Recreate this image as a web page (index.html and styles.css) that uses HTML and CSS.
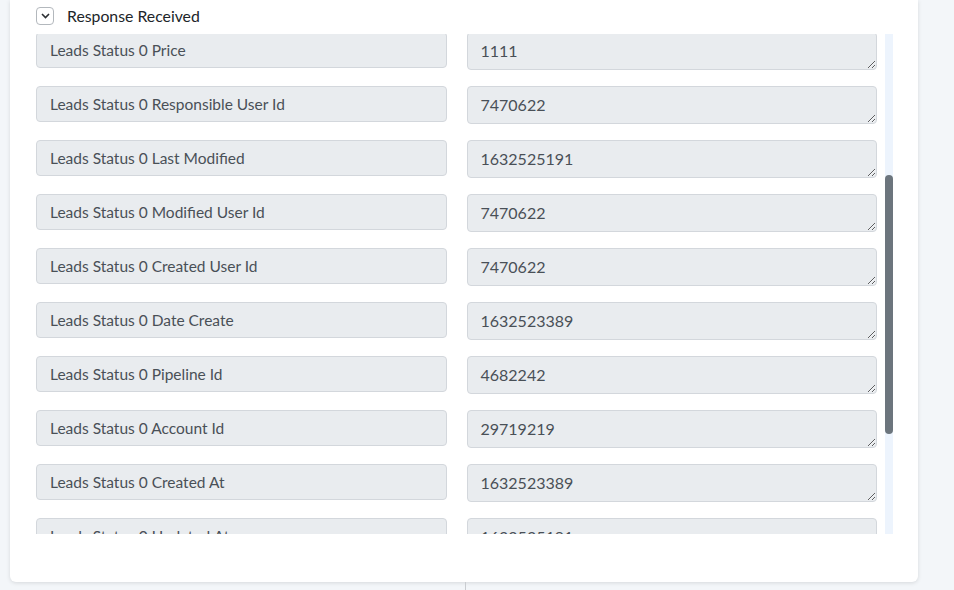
FILE: index.html
```html
<!DOCTYPE html>
<html lang="en">
<head>
    <meta charset="UTF-8">
    <meta name="viewport" content="width=device-width, initial-scale=1.0">
    <title>Response Received</title>
    <link rel="stylesheet" href="styles.css">
</head>
<body>
    <div class="card">
        <div class="card-head">
            <button class="toggle" type="button">
                <svg width="9" height="6" viewBox="0 0 9 6"><path d="M1 1l3.5 3.5L8 1" fill="none" stroke="#2b2f33" stroke-width="1.6"/></svg>
            </button>
            <span class="card-title">Response Received</span>
        </div>

        <div class="fields-wrap">
            <div class="fields" id="fields">
                <!-- rows are filled in by the script below -->
            </div>
            <div class="scroll-track">
                <div class="scroll-thumb" id="thumb"></div>
            </div>
        </div>
    </div>
    <div class="connector"></div>

    <script>
        const rows = [
            ["Account Subdomain", "pabbly"],
            ["Leads Status 0 Id", "1048117"],
            ["Leads Status 0 Name", "Deal #1048117"],
            ["Leads Status 0 Status Id", "43212289"],
            ["Leads Status 0 Old Status Id", "43212286"],
            ["Leads Status 0 Price", "1111"],
            ["Leads Status 0 Responsible User Id", "7470622"],
            ["Leads Status 0 Last Modified", "1632525191"],
            ["Leads Status 0 Modified User Id", "7470622"],
            ["Leads Status 0 Created User Id", "7470622"],
            ["Leads Status 0 Date Create", "1632523389"],
            ["Leads Status 0 Pipeline Id", "4682242"],
            ["Leads Status 0 Account Id", "29719219"],
            ["Leads Status 0 Created At", "1632523389"],
            ["Leads Status 0 Updated At", "1632525191"],
            ["Leads Status 0 Closed At", "0"],
            ["Account Id", "29719219"],
            ["Account Links Self", "https://pabbly.amocrm.ru"]
        ];

        const list = document.getElementById("fields");
        rows.forEach(([label, value]) => {
            const name = document.createElement("div");
            name.className = "field-name";
            name.textContent = label;

            const box = document.createElement("textarea");
            box.className = "field-value";
            box.rows = 1;
            box.readOnly = true;
            box.value = value;

            list.appendChild(name);
            list.appendChild(box);
        });

        list.scrollTop = 5 * 54 + 2;

        // size and place the thumb of the scrollbar
        const view = list.clientHeight;
        const full = list.scrollHeight;
        const thumbHeight = Math.round(view * view / full);
        const thumbTop = Math.round(list.scrollTop / full * view);
        const thumb = document.getElementById("thumb");
        thumb.style.height = thumbHeight + "px";
        thumb.style.marginTop = thumbTop + "px";
    </script>
</body>
</html>
```

FILE: styles.css
```css
* {
    box-sizing: border-box;
}
body {
    margin: 0;
    background-color: #f3f6f9;
    font-family: Lato, "Liberation Sans", sans-serif;
    color: #212529;
}
.card {
    width: 908px;
    margin-left: 10px;
    padding: 7px 25px 48px 26px;
    background-color: #fff;
    border-radius: 0 0 6px 6px;
    box-shadow: 0 1px 4px rgba(0, 0, 0, 0.12);
}
.card-head {
    display: flex;
    align-items: center;
    gap: 13px;
    height: 18px;
    margin-bottom: 9px;
}
.toggle {
    display: flex;
    align-items: center;
    justify-content: center;
    width: 18px;
    height: 18px;
    padding: 0;
    background: #fff;
    border: 1px solid #b3b8bd;
    border-radius: 4px;
}
.card-title {
    font-size: 15.8px;
    line-height: 16px;
}
.fields-wrap {
    display: flex;
    gap: 8px;
    height: 500px;
}
.fields {
    flex: 1;
    display: grid;
    grid-template-columns: 1fr 1fr;
    column-gap: 20px;
    row-gap: 16px;
    align-items: start;
    padding-bottom: 9px;
    overflow: hidden;
}
.scroll-track {
    width: 8px;
    background-color: #edf4fd;
}
.scroll-thumb {
    width: 8px;
    background-color: #6c757d;
    border-radius: 4px;
}
.field-name {
    height: 36px;
    padding: 0 13px;
    line-height: 34px;
    font-size: 15.5px;
    color: #495057;
    background-color: #e9ecef;
    border: 1px solid #d3d7dc;
    border-radius: 4px;
    white-space: nowrap;
    overflow: hidden;
}
.field-value {
    display: block;
    width: 100%;
    height: 38px;
    padding: 6px 13px;
    font-family: Lato, "Liberation Sans", sans-serif;
    font-size: 16px;
    line-height: 24px;
    color: #495057;
    background-color: #e9ecef;
    border: 1px solid #d3d7dc;
    border-radius: 4px;
    outline: none;
}
.connector {
    width: 1px;
    height: 20px;
    margin-left: 465px;
    background-color: #c9ccd0;
}
```
